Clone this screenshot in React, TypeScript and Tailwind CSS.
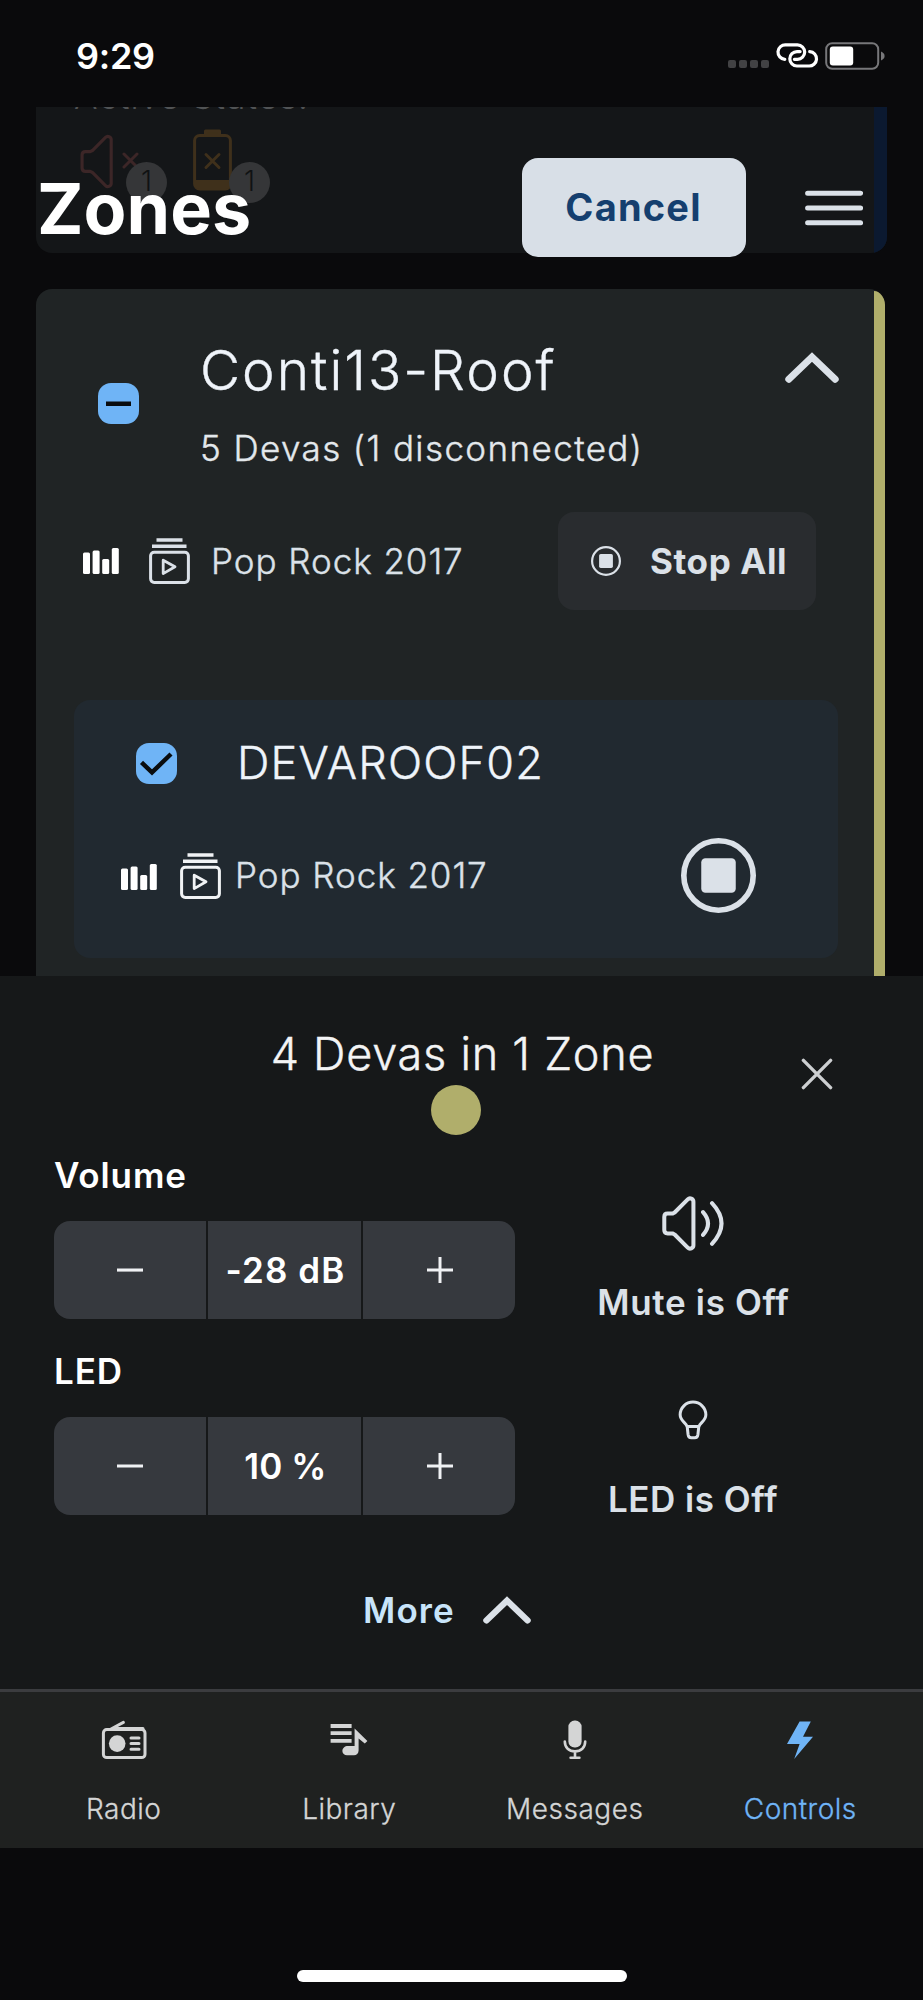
import React from 'react';
import clsx from 'clsx';

const Speaker: React.FC<{ waves?: boolean }> = ({ waves }) => (
  <svg
    width={waves ? 64 : 34}
    height="57"
    viewBox={waves ? '0 0 60 54' : '0 0 32 54'}
    fill="none"
    stroke="currentColor"
    strokeWidth={waves ? 3.8 : 3}
    strokeLinecap="round"
    strokeLinejoin="round"
    className="shrink-0"
  >
    <path d="M6 17.6H10.5L12.6 16.6L25 4.2C27 2.2 30.4 3.6 30.4 6.4V47.6C30.4 50.4 27 51.8 25 49.8L12.6 37.4L10.5 36.4H6Q2.8 36.4 2.8 33.2V20.8Q2.8 17.6 6 17.6Z" />
    {waves && <path d="M39.5 16.2Q49 27 39.5 37.8M48 7.8Q66 27 48 46.2" />}
  </svg>
);

const Bars = () => (
  <svg width="36" height="26" viewBox="0 0 36 26" fill="#fff">
    <rect x="0" y="4.5" width="7" height="21.5" rx="1.5" />
    <rect x="9.6" y="2.5" width="7" height="23.5" rx="1.5" />
    <rect x="19.2" y="11" width="7" height="15" rx="1.5" />
    <rect x="28.8" y="0" width="7" height="26" rx="1.5" />
  </svg>
);

const Playlist = () => (
  <svg width="41" height="46" viewBox="0 0 41 46" fill="none" stroke="currentColor" strokeWidth="3">
    <path d="M7.5 2H33.5M3 8.3H37.5" strokeWidth="3.4" />
    <rect x="1.6" y="14.2" width="37.8" height="30.2" rx="3.6" />
    <path d="M14.2 22.2L26 28.8L14.2 35.6Z" strokeWidth="2.8" strokeLinejoin="round" />
  </svg>
);

const Chevron: React.FC<{ width: number; height: number }> = ({ width, height }) => (
  <svg width={width} height={height} viewBox="0 0 54 31" fill="none" stroke="#dbe1e8" strokeWidth="7" strokeLinecap="round">
    <path d="M3.8 27.2L27 5L50.2 27.2" />
  </svg>
);

const StopIcon: React.FC<{ size: number; stroke: number }> = ({ size, stroke }) => (
  <svg width={size} height={size} viewBox={`0 0 ${size} ${size}`} fill="none" stroke="currentColor" strokeWidth={stroke}>
    <circle cx={size / 2} cy={size / 2} r={(size - stroke) / 2} />
    <rect x={size * 0.27} y={size * 0.27} width={size * 0.46} height={size * 0.46} rx={size * 0.055} fill="currentColor" stroke="none" />
  </svg>
);

const Checkbox: React.FC<{ partial?: boolean }> = ({ partial }) => (
  <span className="flex h-[41px] w-[41px] shrink-0 items-center justify-center rounded-[13px] bg-[#6fb4f6]">
    <svg width="41" height="41" viewBox="0 0 41 41" fill="none" stroke="#0a0c0e" strokeWidth="4.4">
      {partial ? <path d="M8 20.7H33" /> : <path d="M5.5 19.4L16 29.4L35 11" />}
    </svg>
  </span>
);

const StateBadge = () => (
  <span className="absolute top-[34px] flex h-[41px] w-[41px] items-center justify-center rounded-full bg-[#353638] pb-[3px] text-[28px] font-light text-[#101213]">
    1
  </span>
);

const Stepper: React.FC<{ label: string; value: string; tight?: boolean }> = ({ label, value, tight }) => (
  <div className="h-[164px] text-[35px] font-semibold text-white">
    <p className="leading-[40px] tracking-[0.9px]">{label}</p>
    <div className="mt-[26px] grid h-[98px] grid-cols-3 gap-[2px] overflow-hidden rounded-[16px]">
      <button className="flex items-center justify-center bg-[#36393e]">
        <svg width="28" height="28" viewBox="0 0 28 28" stroke="#f0f2f4" strokeWidth="3.2"><path d="M1 14H27" /></svg>
      </button>
      <div className={clsx('flex items-center justify-center whitespace-nowrap bg-[#36393e] pl-[2px]', tight ? 'tracking-[0.1px]' : 'tracking-[1.1px]')}>
        {value}
      </div>
      <button className="flex items-center justify-center bg-[#36393e] pl-[2px]">
        <svg width="28" height="28" viewBox="0 0 28 28" stroke="#f0f2f4" strokeWidth="3"><path d="M1 14H27M14 1V27" /></svg>
      </button>
    </div>
  </div>
);

const tabs = [
  {
    label: 'Radio',
    icon: (
      <svg width="46" height="40" viewBox="0 0 46 40" fill="none" stroke="currentColor" strokeWidth="3" strokeLinecap="round">
        <rect x="2.4" y="9.6" width="41.6" height="28" rx="3.4" />
        <path d="M10 9L22.4 2.4M12 8.6H42" />
        <circle cx="16.2" cy="23.6" r="8.3" fill="currentColor" stroke="none" />
        <path d="M30 18H38M30 23.6H38M30 29.2H38" />
      </svg>
    ),
  },
  {
    label: 'Library',
    icon: (
      <svg width="38" height="40" viewBox="0 0 38 40" fill="currentColor">
        <path d="M0.6 4H21.6V8H0.6ZM0.6 11.2H21.6V15H0.6ZM0.6 19H21.6V22.8H0.6Z" />
        <path d="M24.6 8.4L37.4 21L34.8 23.6L28.6 18.4V30.5C28.6 33.5 26.5 35.2 24 35.2H17C14.4 35.2 12.4 33.4 12.4 31.2C12.4 28 14.8 26 18 26H24.6Z" />
      </svg>
    ),
  },
  {
    label: 'Messages',
    icon: (
      <svg width="24" height="40" viewBox="0 0 24 40" fill="none" stroke="currentColor" strokeWidth="2.6" strokeLinecap="round">
        <rect x="5.4" y="0.6" width="13.2" height="27" rx="6.2" fill="currentColor" stroke="none" />
        <path d="M1.8 21.6C1.8 27.6 6 31.4 12 31.4C18 31.4 22.2 27.6 22.2 21.6M12 31.4V37.6M7.6 37.8H16.4" />
      </svg>
    ),
  },
  {
    label: 'Controls',
    active: true,
    icon: (
      <svg width="26" height="40" viewBox="0 0 26 40" fill="currentColor">
        <path d="M12.6 1.6H23.8L16 16.8H26L7.2 39L12.6 24H0Z" />
      </svg>
    ),
  },
];

const App: React.FC = () => {
  return (
    <div className="flex h-[2000px] w-[923px] flex-col overflow-hidden bg-[#0a0a0c] font-['Inter',sans-serif] text-[#dbe1e8]">
      {/* Status bar */}
      <div className="flex h-[107px] shrink-0 items-center justify-between pl-[76px] pr-[38px] pt-[4px] text-white">
        <span className="text-[36px] font-semibold tracking-[-0.3px]">9:29</span>
        <div className="flex items-center">
          <div className="mt-[17px] flex gap-[3px]">
            {[0, 1, 2, 3].map((i) => <span key={i} className="h-[8px] w-[8px] rounded-[2px] bg-[#424244]" />)}
          </div>
          <svg className="ml-[7px]" width="43" height="27" viewBox="0 0 43 27" fill="none" stroke="currentColor" strokeWidth="3.2" strokeLinecap="round">
            <path d="M8.8 17.3A7.3 7.2 0 0 1 9.8 2.9H21.5A7.2 7.2 0 0 1 21.5 17.3H18.4" />
            <path d="M33.7 9.6A7.3 7.2 0 0 1 32.7 24H21A7.2 7.2 0 0 1 21 9.6H24.1" />
          </svg>
          <svg className="ml-[6px]" width="60" height="28" viewBox="0 0 60 28" fill="none">
            <rect x="1.2" y="1.2" width="52" height="25.6" rx="6" stroke="#77777a" strokeWidth="2" />
            <rect x="4.8" y="4.4" width="23.4" height="19" rx="3" fill="#fff" />
            <path d="M56 9.5C58.6 10.6 59.6 12 59.6 14C59.6 16 58.6 17.4 56 18.5Z" fill="#77777a" />
          </svg>
        </div>
      </div>

      {/* Zone list, scrolled beneath the page header */}
      <main className="relative flex h-[869px] shrink-0 flex-col gap-[36px] overflow-hidden px-[36px]">
        <section className="flex h-[146px] w-[851px] shrink-0 overflow-hidden rounded-b-[16px] bg-[#141618]">
          <div className="w-[838px] pl-[38px]">
            <p className="mt-[-21px] text-[35px] font-light leading-[20px] tracking-[1px] text-[#515355]">Active States:</p>
            <div className="mt-[22px] flex gap-[50px]">
              <div className="relative flex w-[66px] pl-[5px] pt-[5px] text-[#3c2627]">
                <Speaker />
                <svg className="ml-[9px] mt-[19px] shrink-0" width="17" height="17" viewBox="0 0 17 17" stroke="currentColor" strokeWidth="3" strokeLinecap="round">
                  <path d="M2 2L15 15M15 2L2 15" />
                </svg>
                <span className="absolute left-[52px] top-0"><StateBadge /></span>
              </div>
              <div className="relative pl-[3px] pt-[1px] text-[#3f301b]">
                <svg width="39" height="62" viewBox="0 0 39 62" fill="none" stroke="currentColor" strokeWidth="3">
                  <rect x="1.6" y="6.6" width="35.8" height="53.4" rx="5" />
                  <path d="M12.5 2H26.5V6H12.5Z" fill="currentColor" strokeLinejoin="round" />
                  <path d="M2 51H37V58Q36 60 33 60H6Q3 60 2 58Z" fill="currentColor" stroke="none" />
                  <path d="M13 25.5L26 38.5M26 25.5L13 38.5" strokeLinecap="round" />
                </svg>
                <span className="absolute left-[39px] top-0"><StateBadge /></span>
              </div>
            </div>
          </div>
          <div className="w-[13px] bg-[#0b1930]" />
        </section>

        <section className="flex h-[720px] w-[849px] shrink-0 overflow-hidden rounded-t-[16px] bg-[#202425]">
          <div className="w-[838px]">
            <div className="flex h-[223px] pl-[62px]">
              <div className="mt-[94px]"><Checkbox partial /></div>
              <div className="ml-[61px] mt-[51px] w-[585px] font-light [-webkit-text-stroke:0.4px]">
                <h2 className="text-[55px] leading-[60px] tracking-[2px] text-[#eff4fa]">Conti13-Roof</h2>
                <p className="mt-[28px] text-[35px] leading-[40px] tracking-[1.4px] text-[#e3e8ec]">5 Devas (1 disconnected)</p>
              </div>
              <div className="mt-[63px]"><Chevron width={54} height={31} /></div>
            </div>
            <div className="flex h-[98px] items-center pl-[46.5px]">
              <Bars />
              <div className="ml-[30.5px]"><Playlist /></div>
              <span className="ml-[21px] text-[35px] font-light tracking-[0.95px] [-webkit-text-stroke:0.4px]">Pop Rock 2017</span>
              <button className="ml-auto mr-[58px] flex h-[98px] w-[258px] items-center gap-[29px] rounded-[16px] bg-[#292c2f] pl-[33px] text-[35px] font-bold tracking-[0.6px]">
                <StopIcon size={30} stroke={2.2} />
                <span className="whitespace-nowrap">Stop All</span>
              </button>
            </div>

            <div className="ml-[38px] mt-[89.5px] h-[258px] w-[764px] rounded-[16px] bg-[#212930]">
              <div className="flex h-[127px] items-center gap-[60px] pl-[62px]">
                <Checkbox />
                <h3 className="text-[45px] font-light tracking-[1.15px] text-[#eff4fa] [-webkit-text-stroke:0.4px]">DEVAROOF02</h3>
              </div>
              <div className="flex h-[97px] items-center pl-[46.5px]">
                <div className="mt-[3px]"><Bars /></div>
                <div className="ml-[23.5px] mt-[1px] text-[#f1f3f5]"><Playlist /></div>
                <span className="ml-[14px] mt-[1px] text-[35px] font-light tracking-[0.95px] [-webkit-text-stroke:0.4px]">Pop Rock 2017</span>
                <span className="ml-auto mr-[82.5px]"><StopIcon size={75} stroke={5.6} /></span>
              </div>
            </div>
          </div>
          <div className="mt-[2px] w-[11px] rounded-tr-[12px] bg-[#b0ae6b]" />
        </section>

        <header className="absolute inset-x-0 top-[51px] flex h-[99px] items-center">
          <h1 className="w-[485px] pl-[37px] pt-[1px] text-[70px] font-bold tracking-[0.1px] text-white">Zones</h1>
          <button className="ml-[36.5px] flex h-[99px] w-[224px] items-center justify-center rounded-[16px] bg-[#d8dfe7] text-[38px] font-bold tracking-[1.2px] text-[#153f6f]">
            Cancel
          </button>
          <svg className="ml-[59.5px]" width="58" height="36" viewBox="0 0 58 36" stroke="#dbe1e8" strokeWidth="5" strokeLinecap="round">
            <path d="M2.6 3.2H55.6M2.6 18H55.6M2.6 32.8H55.6" />
          </svg>
        </header>
      </main>

      {/* Controls for the selected devices */}
      <section className="h-[713px] shrink-0 bg-[#161819] pt-[53px]">
        <div className="grid h-[106px] grid-cols-[1fr_500px_1fr]">
          <div className="col-start-2 flex flex-col items-center">
            <h2 className="pl-[2px] text-[45px] font-light leading-[50px] tracking-[0.75px] text-[#f3f4f5] [-webkit-text-stroke:0.4px]">4 Devas in 1 Zone</h2>
            <span className="mr-[11px] mt-[6px] h-[50px] w-[50px] rounded-full bg-[#b0ae6b]" />
          </div>
          <svg className="ml-[89px] mt-[29px]" width="32" height="32" viewBox="0 0 32 32" stroke="#cdcfd1" strokeWidth="3.4" strokeLinecap="round">
            <path d="M2.4 2.4L29.6 29.6M29.6 2.4L2.4 29.6" />
          </svg>
        </div>

        <div className="mt-[20px] grid grid-cols-[461px_355px] gap-y-[32px] pl-[54px]">
          <Stepper label="Volume" value="-28 dB" />
          <div className="flex h-[164px] flex-col items-center pt-[40px] text-[35px] font-semibold">
            <Speaker waves />
            <p className="mt-[30px] pl-[2px] leading-[40px] tracking-[0.65px]">Mute is Off</p>
          </div>
          <Stepper label="LED" value="10 %" tight />
          <div className="flex h-[164px] flex-col items-center pt-[49px] text-[35px] font-semibold">
            <svg className="shrink-0" width="30" height="40" viewBox="0 0 28 37" fill="none" stroke="currentColor" strokeWidth="2.8" strokeLinejoin="round">
              <path d="M8.4 24.6C8 21.4 2 19.4 2 13.6A12 11.8 0 0 1 26 13.6C26 19.4 20 21.4 19.6 24.6ZM8.6 24.6L9.4 32Q9.8 35 12.4 35H15.6Q18.2 35 18.6 32L19.4 24.6" />
            </svg>
            <p className="mt-[39px] pl-[1px] leading-[40px] tracking-[0.52px]">LED is Off</p>
          </div>
        </div>

        <button className="ml-[363px] mt-[75px] flex items-center gap-[28px]">
          <span className="text-[35px] font-semibold leading-[40px] tracking-[1.1px] text-[#c8e4fa]">More</span>
          <Chevron width={48} height={28} />
        </button>
      </section>

      <nav className="grid h-[159px] shrink-0 grid-cols-4 border-t-[3px] border-[#3b3c3f] bg-[#1f2120] pl-[11px] pr-[10px] pt-[28px]">
        {tabs.map((tab) => (
          <a key={tab.label} className={clsx('flex flex-col items-center', tab.active ? 'text-[#6fb4f6]' : 'text-[#d4d5d5]')}>
            {tab.icon}
            <span className="mt-[34px] text-[28px] font-light leading-[30px] tracking-[0.5px] [-webkit-text-stroke:0.3px]">{tab.label}</span>
          </a>
        ))}
      </nav>

      <div className="mx-auto mt-[122px] h-[12px] w-[330px] shrink-0 rounded-full bg-white" />
    </div>
  );
};

export default App;
